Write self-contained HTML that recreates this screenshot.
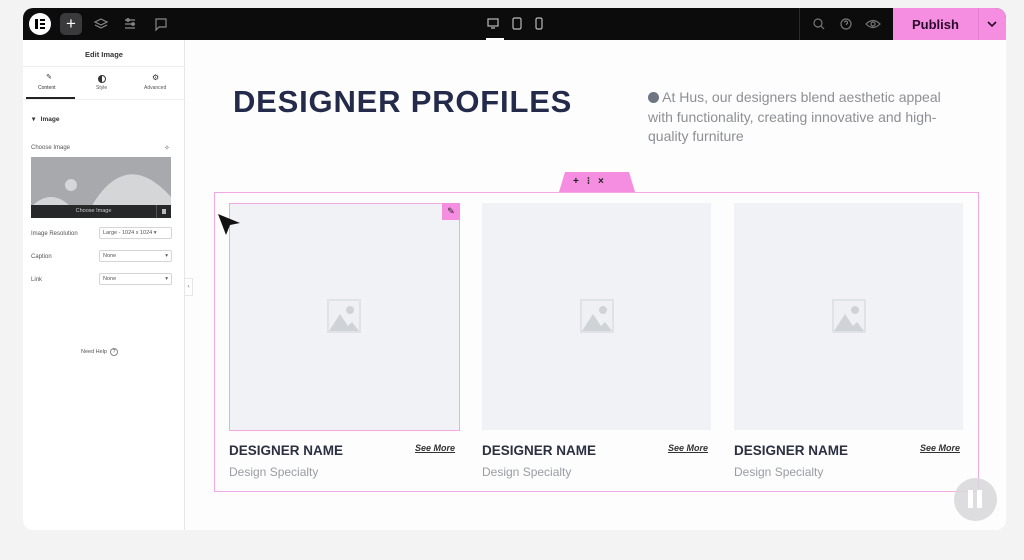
<!DOCTYPE html>
<html><head><meta charset="utf-8"><style>
*{box-sizing:border-box;margin:0;padding:0}
body{width:1024px;height:560px;background:#f3f3f4;font-family:"Liberation Sans",sans-serif;position:relative;overflow:hidden}
.abs{position:absolute}
.win{left:23px;top:8px;width:983px;height:522px;background:#fdfdfe;border-radius:10px;overflow:hidden}
.top{left:0;top:0;width:983px;height:32px;background:#0c0c0d}
.side{left:0;top:32px;width:162px;height:490px;background:#fff;border-right:1px solid #e6e6e8}
.t{font-size:6px;color:#555}
.sel{width:73px;height:12px;border:1px solid #d5d5d8;border-radius:2px;font-size:5.5px;color:#555;padding:2px 3px;background:#fff}
.img{background:#f1f2f5}
.nm{font-size:13.5px;font-weight:bold;color:#2b2f3f}
.sp{font-size:12px;color:#9a9ca3}
.sm{font-size:9px;font-style:italic;font-weight:bold;color:#333;text-decoration:underline}
</style></head><body>
<div class="abs win">
 <div class="abs top">
  <div class="abs" style="left:6px;top:5px;width:22px;height:22px;border-radius:50%;background:#fff"></div>
  <div class="abs" style="left:12px;top:11px;width:3px;height:10px;background:#000"></div>
  <div class="abs" style="left:17px;top:11px;width:5px;height:2px;background:#000"></div>
  <div class="abs" style="left:17px;top:15px;width:5px;height:2px;background:#000"></div>
  <div class="abs" style="left:17px;top:19px;width:5px;height:2px;background:#000"></div>
  <div class="abs" style="left:37px;top:5px;width:22px;height:22px;border-radius:5px;background:#3a3a3d;color:#fff;font-size:17px;text-align:center;line-height:21px">+</div>
  <svg class="abs" style="left:70px;top:8px" width="80" height="16" fill="none" stroke="#888" stroke-width="1.2"><path d="M2 6l6-3 6 3-6 3z M2 9l6 3 6-3"/><path d="M32 4h10M32 8h10M32 12h10"/><circle cx="35" cy="4" r="1.3"/><circle cx="40" cy="8" r="1.3"/><path d="M63 3h10v8h-7l-3 3z"/></svg>
  <div class="abs" style="left:776px;top:0;width:1px;height:32px;background:#2a2a2a"></div>
  <svg class="abs" style="left:462px;top:9px" width="60" height="14" fill="none" stroke="#bbb" stroke-width="1.2"><rect x="3" y="2" width="10" height="7"/><path d="M6 11h4"/><rect x="28" y="1" width="8" height="11" rx="1.5"/><rect x="51" y="1" width="6" height="11" rx="1.5"/></svg>
  <div class="abs" style="left:463px;top:30px;width:18px;height:2px;background:#fff"></div>
  <svg class="abs" style="left:788px;top:8px" width="70" height="16" fill="none" stroke="#777" stroke-width="1.2"><circle cx="7" cy="7" r="4"/><path d="M10 10l3 3"/><circle cx="35" cy="8" r="5"/><path d="M33.5 6.5a1.5 1.5 0 1 1 2 1.5v1"/><path d="M55 8q7-7 14 0q-7 7-14 0z"/><circle cx="62" cy="8" r="2"/></svg>
  <div class="abs" style="left:870px;top:0;width:113px;height:32px;background:#f58ee0"></div>
  <div class="abs" style="left:889px;top:9px;font-size:13px;font-weight:bold;color:#2a0a2a">Publish</div>
  <div class="abs" style="left:955px;top:0;width:1px;height:32px;background:#e57dd0"></div>
  <svg class="abs" style="left:963px;top:12px" width="12" height="8" fill="none" stroke="#2a0a2a" stroke-width="1.6"><path d="M2 2l4 4 4-4"/></svg>
 </div>
 <div class="abs side">
  <div class="abs" style="left:0;top:10px;width:162px;text-align:center;font-size:7.5px;font-weight:bold;color:#333">Edit Image</div>
  <div class="abs" style="left:0;top:26px;width:162px;height:1px;background:#eee"></div>
  <div class="abs t" style="left:16px;top:33px;width:20px;text-align:center;font-size:7px;color:#333">✎</div>
  <div class="abs t" style="left:15px;top:45px;font-size:5px;color:#333">Content</div>
  <div class="abs" style="left:75px;top:35px;width:8px;height:8px;border-radius:50%;border:1px solid #333;background:linear-gradient(90deg,#333 50%,#fff 50%)"></div>
  <div class="abs t" style="left:73px;top:45px;font-size:5px">Style</div>
  <div class="abs t" style="left:129px;top:33px;font-size:8px;color:#333">⚙</div>
  <div class="abs t" style="left:121px;top:45px;font-size:5px">Advanced</div>
  <div class="abs" style="left:3px;top:57px;width:49px;height:2px;background:#222"></div>
  <div class="abs" style="left:0;top:59px;width:162px;height:1px;background:#eee"></div>
  <div class="abs" style="left:9px;top:75px;font-size:6.5px;font-weight:bold;color:#333">▾&nbsp;&nbsp; Image</div>
  <div class="abs t" style="left:8px;top:105px">Choose Image</div>
  <div class="abs t" style="left:141px;top:104px;font-size:7px">✧</div>
  <div class="abs" style="left:8px;top:117px;width:140px;height:50px;background:#a7a9ad;overflow:hidden">
   <svg width="140" height="50"><circle cx="40" cy="28" r="6" fill="#d5d6d8"/><path d="M0 50 Q20 30 40 50Z M60 50 Q95 -10 140 40 V50Z" fill="#d5d6d8"/></svg>
  </div>
  <div class="abs" style="left:8px;top:165px;width:140px;height:13px;background:#27282a"></div>
  <div class="abs" style="left:8px;top:168px;width:125px;text-align:center;font-size:5.5px;color:#ccc">Choose Image</div>
  <div class="abs" style="left:133px;top:165px;width:1px;height:13px;background:#555"></div>
  <div class="abs" style="left:139px;top:169px;width:4px;height:5px;background:#bbb"></div>
  <div class="abs t" style="left:8px;top:191px">Image Resolution</div>
  <div class="abs sel" style="left:76px;top:187px">Large - 1024 x 1024 ▾</div>
  <div class="abs t" style="left:8px;top:214px">Caption</div>
  <div class="abs sel" style="left:76px;top:210px">None<span style="float:right">▾</span></div>
  <div class="abs t" style="left:8px;top:237px">Link</div>
  <div class="abs sel" style="left:76px;top:233px">None<span style="float:right">▾</span></div>
  <div class="abs t" style="left:58px;top:308px;font-size:5.5px">Need Help &nbsp;<span style="display:inline-block;width:8px;height:8px;border:1px solid #888;border-radius:50%;text-align:center;font-size:5px;line-height:6px">?</span></div>
 </div>
 <div class="abs" style="left:162px;top:270px;width:8px;height:18px;background:#fff;border:1px solid #e6e6e8;border-left:0;font-size:6px;color:#666;line-height:16px;text-align:center">‹</div>
 <div class="abs" style="left:210px;top:76px;font-size:31px;font-weight:bold;color:#232a4a;letter-spacing:0.8px">DESIGNER PROFILES</div>
 <div class="abs" style="left:625px;top:80px;width:320px;font-size:14px;line-height:19.5px;color:#8d8f94"><span style="display:inline-block;width:11px;height:11px;border-radius:50%;background:#6f7583;vertical-align:-1px"></span> At Hus, our designers blend aesthetic appeal with functionality, creating innovative and high-quality furniture</div>
 <div class="abs" style="left:191px;top:184px;width:765px;height:300px;border:1px solid #f3a8e6"></div>
 <div class="abs" style="left:536px;top:164px;width:76px;height:20px;background:#f58ee0;clip-path:polygon(6px 0,70px 0,76px 20px,0 20px)"></div>
 <div class="abs" style="left:550px;top:168px;font-size:10px;font-weight:bold;color:#222;letter-spacing:8px">+⁝×</div>
 <div class="abs img" style="left:206px;top:195px;width:231px;height:228px;border:1px solid #f3a8e6"></div>
 <div class="abs" style="left:419px;top:195px;width:18px;height:17px;background:#f58ee0;font-size:9px;text-align:center;line-height:17px;color:#222">✎</div>
 <div class="abs img" style="left:459px;top:195px;width:229px;height:227px"></div>
 <div class="abs img" style="left:711px;top:195px;width:229px;height:227px"></div>
 <svg class="abs" style="left:303px;top:290px" width="36" height="36"><rect x="1" y="1" width="34" height="34" fill="#dfe2e6"/><rect x="3" y="3" width="30" height="30" fill="#eef0f3"/><circle cx="24" cy="12" r="4" fill="#cfd3d8"/><path d="M3 33L14 16 22 28 26 24 33 33Z" fill="#cfd3d8"/></svg>
 <svg class="abs" style="left:556px;top:290px" width="36" height="36"><rect x="1" y="1" width="34" height="34" fill="#dfe2e6"/><rect x="3" y="3" width="30" height="30" fill="#eef0f3"/><circle cx="24" cy="12" r="4" fill="#cfd3d8"/><path d="M3 33L14 16 22 28 26 24 33 33Z" fill="#cfd3d8"/></svg>
 <svg class="abs" style="left:808px;top:290px" width="36" height="36"><rect x="1" y="1" width="34" height="34" fill="#dfe2e6"/><rect x="3" y="3" width="30" height="30" fill="#eef0f3"/><circle cx="24" cy="12" r="4" fill="#cfd3d8"/><path d="M3 33L14 16 22 28 26 24 33 33Z" fill="#cfd3d8"/></svg>
 <div class="abs nm" style="left:206px;top:435px">DESIGNER NAME</div>
 <div class="abs sp" style="left:206px;top:457px">Design Specialty</div>
 <div class="abs sm" style="left:392px;top:435px">See More</div>
 <div class="abs nm" style="left:459px;top:435px">DESIGNER NAME</div>
 <div class="abs sp" style="left:459px;top:457px">Design Specialty</div>
 <div class="abs sm" style="left:645px;top:435px">See More</div>
 <div class="abs nm" style="left:711px;top:435px">DESIGNER NAME</div>
 <div class="abs sp" style="left:711px;top:457px">Design Specialty</div>
 <div class="abs sm" style="left:897px;top:435px">See More</div>
 <svg class="abs" style="left:193px;top:204px" width="26" height="26"><path d="M2 2L24 11 14 13 10 23Z" fill="#111"/></svg>
 <div class="abs" style="left:931px;top:470px;width:43px;height:43px;border-radius:50%;background:rgba(215,215,217,0.85)"></div>
 <div class="abs" style="left:945px;top:482px;width:5px;height:18px;background:#fff"></div>
 <div class="abs" style="left:954px;top:482px;width:5px;height:18px;background:#fff"></div>
</div>
</body></html>
